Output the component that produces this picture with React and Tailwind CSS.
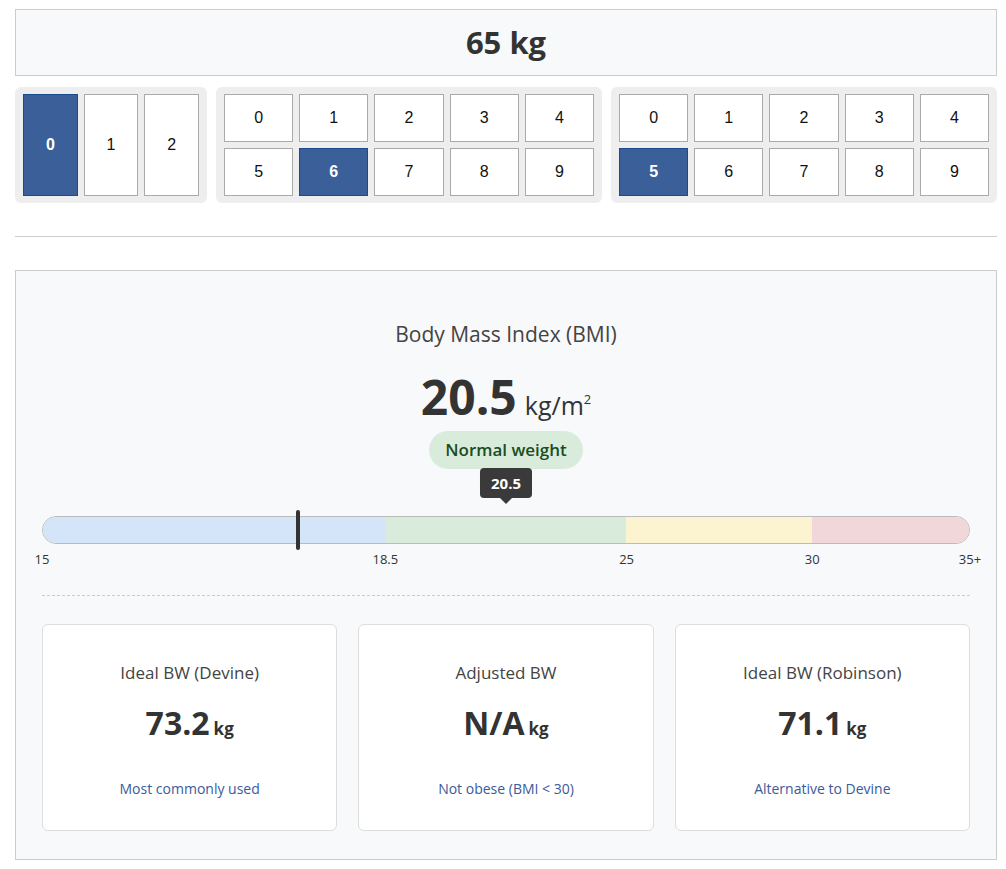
const SEGOE = { fontFamily: '"Open Sans", "Noto Sans", sans-serif' }

function Digit({ n, selected, className }) {
  return (
    <button
      className={
        'flex items-center justify-center border text-base font-["Liberation_Sans",Arial,sans-serif] ' +
        (selected
          ? 'bg-[#3b5f99] border-[#1a4a8f] text-white font-bold'
          : 'bg-white border-[#aaa] text-[#111]') +
        ' ' + className
      }
    >
      {n}
    </button>
  )
}

function Group({ digits, selected, className }) {
  return (
    <div className={'bg-[#eee] rounded-md px-2 py-[7px] ' + className}>
      <div className="grid grid-cols-5 gap-[6px]">
        {digits.map((d) => (
          <Digit key={d} n={d} selected={d === selected} className="h-12" />
        ))}
      </div>
    </div>
  )
}

const cards = [
  { title: 'Ideal BW (Devine)', value: '73.2', note: 'Most commonly used' },
  { title: 'Adjusted BW', value: 'N/A', note: 'Not obese (BMI < 30)' },
  { title: 'Ideal BW (Robinson)', value: '71.1', note: 'Alternative to Devine' },
]

const ticks = [
  { label: '15', left: '0%' },
  { label: '18.5', left: '37%' },
  { label: '25', left: '63%' },
  { label: '30', left: '83%' },
  { label: '35+', left: '100%' },
]

export default function App() {
  return (
    <div className="pl-[15px] pr-[9px] pt-[9px] pb-[10px] bg-white text-[#333]" style={SEGOE}>
      {/* Weight display */}
      <div className="h-[67px] border border-[#ccc] bg-[#f8f9fa] flex items-center justify-center">
        <span className="text-[31px] font-bold text-[#333]">65 kg</span>
      </div>

      {/* Digit pickers */}
      <div className="flex gap-[9px] mt-[11px]">
        <div className="w-[192px] bg-[#eee] rounded-md px-2 py-[7px] flex gap-[6px]">
          {[0, 1, 2].map((d) => (
            <Digit key={d} n={d} selected={d === 0} className="flex-1 h-[102px]" />
          ))}
        </div>
        <Group digits={[0, 1, 2, 3, 4, 5, 6, 7, 8, 9]} selected={6} className="flex-1" />
        <Group digits={[0, 1, 2, 3, 4, 5, 6, 7, 8, 9]} selected={5} className="flex-1" />
      </div>

      <hr className="mt-[33px] border-0 border-t border-[#ccc]" />

      {/* BMI panel */}
      <div className="mt-[33px] border border-[#ccc] bg-[#f8f9fa] px-[26px] pt-[49px] pb-[28px] flex flex-col items-center">
        <div className="text-[21px] leading-7 text-[#444]">Body Mass Index (BMI)</div>
        <div className="mt-[20px] flex items-baseline h-[58px]">
          <span className="text-[48px] leading-[58px] font-bold text-[#333]">20.5</span>
          <span className="ml-2 text-[25px] text-[#333]">
            kg/m<sup className="text-[13px] relative -top-[11px]">2</sup>
          </span>
        </div>
        <div className="mt-[5px] h-[38px] px-4 rounded-full bg-[#d9ecdb] text-[#1a4d1e] text-[17px] font-semibold flex items-center">
          Normal weight
        </div>

        {/* Scale */}
        <div className="relative w-full mt-[47px]">
          <div className="absolute bottom-[calc(100%+12px)] left-[50%] -translate-x-1/2">
            <div className="bg-[#3a3a3a] text-white text-[15px] font-bold rounded px-[11px] h-[30px] flex items-center">
              20.5
            </div>
            <div className="mx-auto w-0 h-0 border-x-[6px] border-x-transparent border-t-[6px] border-t-[#3a3a3a]" />
          </div>
          <div className="h-[28px] rounded-full border border-[#bbb] overflow-hidden flex">
            <div className="w-[37%] bg-[#d4e4f9]" />
            <div className="w-[26%] bg-[#d9ecdb]" />
            <div className="w-[20%] bg-[#fcf3d0]" />
            <div className="w-[17%] bg-[#f2d7da]" />
          </div>
          <div className="absolute top-[-6px] left-[27.6%] w-[4px] h-[40px] rounded-sm bg-[#333] -translate-x-1/2" />
          <div className="relative h-4 mt-[7px] text-[13px] text-[#333]">
            {ticks.map((t) => (
              <span
                key={t.label}
                className="absolute top-0 -translate-x-1/2 leading-4"
                style={{ left: t.left }}
              >
                {t.label}
              </span>
            ))}
          </div>
        </div>

        <div className="w-full mt-[28px] border-t border-dashed border-[#ccc]" />

        {/* Cards */}
        <div className="w-full mt-[28px] grid grid-cols-3 gap-[21px]">
          {cards.map((c) => (
            <div
              key={c.title}
              className="h-[207px] bg-white border border-[#ddd] rounded-md flex flex-col items-center pt-[36px]"
            >
              <div className="text-[17px] leading-6 text-[#444]">{c.title}</div>
              <div className="mt-[18px] flex items-baseline">
                <span className="text-[32px] leading-[40px] font-bold text-[#333]">{c.value}</span>
                <span className="ml-1 text-[17px] font-bold text-[#333]">kg</span>
              </div>
              <div className="mt-[36px] text-[14px] leading-5 text-[#3a5a9a]">{c.note}</div>
            </div>
          ))}
        </div>
      </div>
    </div>
  )
}
